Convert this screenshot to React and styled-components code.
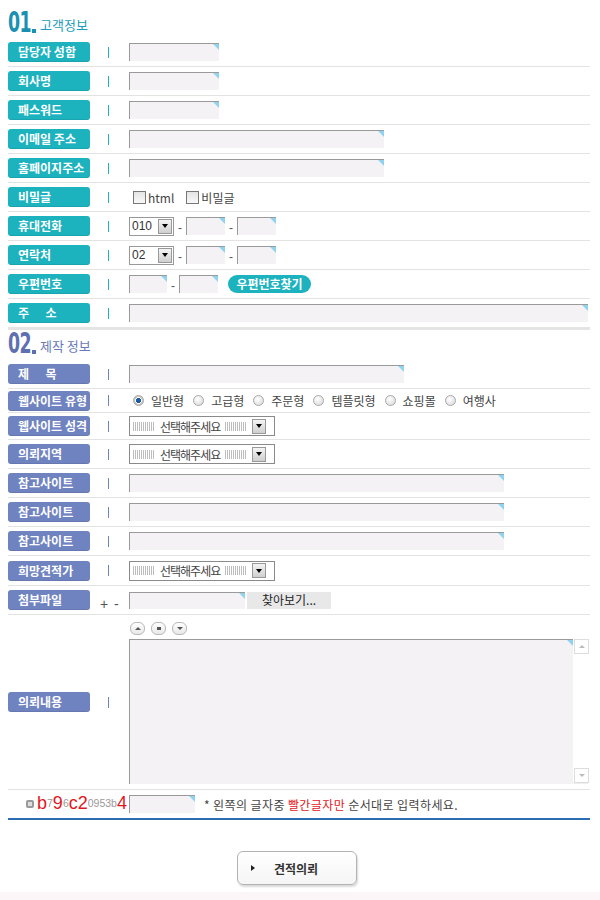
import React from "react";
import styled, { createGlobalStyle, css } from "styled-components";

const Global = createGlobalStyle`
  html, body { margin: 0; padding: 0; background: #fff; }
  body { font-family: "Noto Sans CJK KR", "Liberation Sans", sans-serif; font-size: 12px; color: #333; }
`;

const TEAL = "#1cb2be";
const BLUE = "#7083c1";

const Page = styled.div`
  width: 600px;
  height: 900px;
  display: flex;
  flex-direction: column;
`;

const Wrap = styled.div`
  margin-left: 8px;
  width: 582px;
`;

const Title = styled.div`
  display: flex;
  align-items: flex-end;
  height: ${(p) => p.$h}px;
  padding-bottom: ${(p) => p.$pb}px;
  box-sizing: border-box;
`;

const Num = styled.span`
  display: inline-block;
  width: 23px;
  font-family: "DejaVu Sans", sans-serif;
  font-weight: bold;
  font-size: 28px;
  line-height: 24px;
  letter-spacing: -1px;
  transform: scaleX(0.62);
  transform-origin: left bottom;
  color: ${(p) => p.$c};
`;

const Dot = styled.span`
  position: relative;
  z-index: 1;
  width: 4px;
  height: 4px;
  background: ${(p) => p.$c};
  margin: 0 4px 2px 1px;
`;

const TitleText = styled.span`
  font-size: 13px;
  line-height: 16px;
  color: ${(p) => p.$c};
  margin-bottom: 2px;
`;

const Row = styled.div`
  display: grid;
  grid-template-columns: 82px 39px 1fr;
  align-items: center;
  height: ${(p) => p.$h || 28}px;
  border-bottom: ${(p) => (p.$thick ? "3px solid #e4e4e4" : "1px solid #e3e3e3")};
  box-sizing: content-box;
`;

const Label = styled.div`
  height: 20px;
  border-radius: 3px;
  background: ${(p) => p.$c};
  color: #fff;
  font-weight: bold;
  font-size: 12px;
  line-height: 20px;
  padding-left: 10px;
  white-space: pre;
  box-shadow: inset 0 -1px 0 rgba(0, 0, 0, 0.08);
`;

const Divider = styled.span`
  width: 1px;
  height: 11px;
  margin-left: 18px;
  background: ${(p) => p.$c};
`;

const PlusMinus = styled.span`
  margin-left: 10px;
  margin-top: 8px;
  font-family: "Liberation Sans", sans-serif;
  font-size: 14px;
  color: #555;
  letter-spacing: 1px;
`;

const Field = styled.div`
  display: flex;
  align-items: center;
`;

const Input = styled.div`
  position: relative;
  flex-shrink: 0;
  width: ${(p) => p.$w}px;
  height: ${(p) => p.$h || 18}px;
  box-sizing: border-box;
  background: #f5f2f5;
  border-top: 1px solid #9a9a9a;
  border-left: 1px solid #9a9a9a;
  &::after {
    content: "";
    position: absolute;
    top: 0;
    right: 0;
    border-top: 6px solid #8fd3ef;
    border-left: 6px solid transparent;
  }
`;

const Dash = styled.span`
  width: 12px;
  text-align: center;
  color: #555;
  font-family: "Liberation Sans", sans-serif;
  font-size: 12px;
  padding-top: 4px;
`;

const Check = styled.span`
  width: 11px;
  height: 11px;
  border: 1px solid #777;
  background: linear-gradient(#e4e4e4, #f8f8f8);
  margin: 0 2px 0 4px;
`;

const Text = styled.span`
  font-size: 12px;
  color: #444;
  margin-right: ${(p) => p.$mr || 0}px;
`;

const SmallSelect = styled.div`
  display: flex;
  align-items: center;
  justify-content: space-between;
  width: 45px;
  height: 19px;
  box-sizing: border-box;
  border: 1px solid #999;
  background: #fff;
  padding: 0 1px 0 2px;
  font-family: "Liberation Sans", sans-serif;
  font-size: 12px;
  color: #333;
`;

const ArrowBox = styled.span`
  flex-shrink: 0;
  width: 14px;
  height: 15px;
  box-sizing: border-box;
  border: 1px solid #999;
  background: linear-gradient(#f4f4f4, #cfcfcf);
  display: flex;
  align-items: center;
  justify-content: center;
  &::before {
    content: "";
    border-top: 4px solid #000;
    border-left: 3.5px solid transparent;
    border-right: 3.5px solid transparent;
  }
`;

const Pill = styled.span`
  margin-left: 10px;
  height: 18px;
  width: 83px;
  border-radius: 9px;
  background: ${TEAL};
  color: #fff;
  font-weight: bold;
  font-size: 12px;
  line-height: 18px;
  text-align: center;
`;

const Radio = styled.span`
  width: 11px;
  height: 11px;
  box-sizing: border-box;
  border-radius: 50%;
  border: 1px solid #a8a8a8;
  background: radial-gradient(circle at 40% 35%, #fff, #d6d6d6);
  margin: 0 7px 0 ${(p) => p.$ml}px;
  ${(p) =>
    p.$on &&
    css`
      background: radial-gradient(circle, #1d5aa6 0 2.4px, #fff 2.6px 3.4px, #c8c8c8 3.6px);
    `}
`;

const BigSelect = styled.div`
  display: flex;
  align-items: center;
  width: 146px;
  height: 20px;
  box-sizing: border-box;
  border: 1px solid #8a8a8a;
  background: #fff;
  padding: 0 1px 0 3px;
  font-size: 12px;
  letter-spacing: -1px;
  white-space: nowrap;
  color: #444;
  gap: 5px;
`;

const Stripes = styled.span`
  flex-shrink: 0;
  width: 22px;
  height: 9px;
  background: repeating-linear-gradient(90deg, #bdbdbd 0 1px, #fff 1px 2px);
`;

const FileBtn = styled.span`
  width: 84px;
  height: 17px;
  margin-left: 2px;
  background: #e8e8e8;
  text-align: center;
  font-size: 12px;
  line-height: 16px;
  color: #222;
`;

const TextRow = styled.div`
  display: grid;
  grid-template-columns: 82px 39px 1fr;
  align-items: center;
  height: 174px;
  border-bottom: 1px solid #e3e3e3;
`;

const Editor = styled.div`
  display: flex;
  flex-direction: column;
  gap: 4px;
  padding-top: 1px;
`;

const EdBtns = styled.div`
  display: flex;
  gap: 6px;
  padding-left: 1px;
`;

const EdBtn = styled.span`
  width: 13px;
  height: 11px;
  border-radius: 6px;
  border: 1px solid #b8b8b8;
  background: linear-gradient(#fff, #e8e8e8);
  display: flex;
  align-items: center;
  justify-content: center;
  &::before {
    content: "";
    ${(p) =>
      p.$kind === "up"
        ? css`border-bottom: 3px solid #555; border-left: 3px solid transparent; border-right: 3px solid transparent;`
        : p.$kind === "down"
        ? css`border-top: 3px solid #555; border-left: 3px solid transparent; border-right: 3px solid transparent;`
        : css`width: 4px; height: 3px; background: #555;`}
  }
`;

const AreaBox = styled.div`
  display: flex;
  width: 459px;
  height: 145px;
`;

const Scroll = styled.div`
  width: 15px;
  display: flex;
  flex-direction: column;
  justify-content: space-between;
  background: #fff;
  border-bottom: 1px solid #eee;
`;

const ScrollBtn = styled.span`
  width: 13px;
  height: 13px;
  margin-left: 1px;
  border: 1px solid #ddd;
  display: flex;
  align-items: center;
  justify-content: center;
  &::before {
    content: "";
    ${(p) =>
      p.$up
        ? css`border-bottom: 3px solid #bbb; border-left: 3px solid transparent; border-right: 3px solid transparent;`
        : css`border-top: 3px solid #bbb; border-left: 3px solid transparent; border-right: 3px solid transparent;`}
  }
`;

const CapRow = styled.div`
  display: flex;
  align-items: center;
  height: 28px;
  padding-left: 18px;
  border-bottom: 2px solid #2a6db3;
`;

const CapIcon = styled.span`
  flex-shrink: 0;
  width: 8px;
  height: 8px;
  border-radius: 2px;
  background: #9a9a9a;
  margin-right: 3px;
  display: flex;
  align-items: center;
  justify-content: center;
  &::before {
    content: "";
    width: 4px;
    height: 4px;
    background: #ddd;
  }
`;

const Cap = styled.span`
  font-family: "Liberation Sans", sans-serif;
  font-size: ${(p) => (p.$red ? 18 : 10.5)}px;
  color: ${(p) => (p.$red ? "#e3161c" : "#9a9a9a")};
  line-height: 20px;
  align-self: flex-end;
  margin-bottom: 2px;
`;

const CapCode = styled.div`
  display: flex;
  flex-shrink: 0;
  width: 92px;
  height: 22px;
`;

const Hint = styled.span`
  margin-left: 9px;
  font-size: 12px;
  letter-spacing: 0.4px;
  color: #444;
  white-space: nowrap;
  & em {
    font-style: normal;
    color: #e3161c;
  }
`;

const Footer = styled.div`
  display: flex;
  justify-content: center;
  padding: 31px 6px 0 0;
  height: 41px;
`;

const SubmitBtn = styled.div`
  width: 120px;
  height: 34px;
  box-sizing: border-box;
  border: 1px solid #b3b3b3;
  border-radius: 6px;
  background: linear-gradient(#fff, #f5f5f5);
  box-shadow: 1px 2px 2px rgba(0, 0, 0, 0.15);
  display: flex;
  align-items: center;
  padding-left: 13px;
  gap: 19px;
  font-weight: bold;
  font-size: 12px;
  color: #333;
  &::before {
    content: "";
    border-left: 4px solid #222;
    border-top: 3.5px solid transparent;
    border-bottom: 3.5px solid transparent;
  }
`;

const Band = styled.div`
  flex: 1;
  background: #fcf6f8;
`;

const FieldRow = ({ label, c, children, h, thick, divider = true, extra }) => (
  <Row $h={h} $thick={thick}>
    <Label $c={c}>{label}</Label>
    {divider ? <Divider $c={c === TEAL ? TEAL : BLUE} /> : extra}
    <Field>{children}</Field>
  </Row>
);

const Sel = ({ v }) => (
  <SmallSelect>
    {v}
    <ArrowBox />
  </SmallSelect>
);

const Choose = () => (
  <BigSelect>
    <Stripes />
    선택해주세요
    <Stripes />
    <ArrowBox />
  </BigSelect>
);

export default function App() {
  const types = ["일반형", "고급형", "주문형", "템플릿형", "쇼핑몰", "여행사"];
  return (
    <Page>
      <Global />
      <Wrap>
        <Title $h={38} $pb={3}>
          <Num $c="#1a91b3">01</Num>
          <Dot $c="#1a91b3" />
          <TitleText $c="#1d9db9">고객정보</TitleText>
        </Title>
        <FieldRow label="담당자 성함" c={TEAL}><Input $w={90} /></FieldRow>
        <FieldRow label="회사명" c={TEAL}><Input $w={90} /></FieldRow>
        <FieldRow label="패스워드" c={TEAL}><Input $w={90} /></FieldRow>
        <FieldRow label="이메일 주소" c={TEAL}><Input $w={255} /></FieldRow>
        <FieldRow label="홈페이지주소" c={TEAL}><Input $w={255} /></FieldRow>
        <FieldRow label="비밀글" c={TEAL}>
          <Check />
          <Text $mr={8}>html</Text>
          <Check />
          <Text>비밀글</Text>
        </FieldRow>
        <FieldRow label="휴대전화" c={TEAL}>
          <Sel v="010" />
          <Dash>-</Dash>
          <Input $w={39} />
          <Dash>-</Dash>
          <Input $w={39} />
        </FieldRow>
        <FieldRow label="연락처" c={TEAL}>
          <Sel v="02" />
          <Dash>-</Dash>
          <Input $w={39} />
          <Dash>-</Dash>
          <Input $w={39} />
        </FieldRow>
        <FieldRow label="우편번호" c={TEAL}>
          <Input $w={38} />
          <Dash>-</Dash>
          <Input $w={39} />
          <Pill>우편번호찾기</Pill>
        </FieldRow>
        <FieldRow label={"주      소"} c={TEAL} thick><Input $w={459} /></FieldRow>

        <Title $h={30} $pb={4}>
          <Num $c="#5e70b0">02</Num>
          <Dot $c="#5e70b0" />
          <TitleText $c="#6879b8">제작 정보</TitleText>
        </Title>
        <FieldRow label={"제      목"} c={BLUE}><Input $w={275} /></FieldRow>
        <FieldRow label="웹사이트 유형" c={BLUE} h={23}>
          {types.map((t, i) => (
            <React.Fragment key={t}>
              <Radio $on={i === 0} $ml={i === 0 ? 4 : 9} />
              <Text>{t}</Text>
            </React.Fragment>
          ))}
        </FieldRow>
        <FieldRow label="웹사이트 성격" c={BLUE} h={26}><Choose /></FieldRow>
        <FieldRow label="의뢰지역" c={BLUE}><Choose /></FieldRow>
        <FieldRow label="참고사이트" c={BLUE}><Input $w={375} /></FieldRow>
        <FieldRow label="참고사이트" c={BLUE}><Input $w={375} /></FieldRow>
        <FieldRow label="참고사이트" c={BLUE}><Input $w={375} /></FieldRow>
        <FieldRow label="희망견적가" c={BLUE} h={29}><Choose /></FieldRow>
        <FieldRow label="첨부파일" c={BLUE} divider={false} extra={<PlusMinus>+ -</PlusMinus>}>
          <Input $w={116} $h={17} />
          <FileBtn>찾아보기...</FileBtn>
        </FieldRow>
        <TextRow>
          <Label $c={BLUE}>의뢰내용</Label>
          <Divider $c={BLUE} />
          <Editor>
            <EdBtns>
              <EdBtn $kind="up" />
              <EdBtn $kind="mid" />
              <EdBtn $kind="down" />
            </EdBtns>
            <AreaBox>
              <Input $w={444} $h={145} />
              <Scroll>
                <ScrollBtn $up />
                <ScrollBtn />
              </Scroll>
            </AreaBox>
          </Editor>
        </TextRow>
        <CapRow>
          <CapIcon />
          <CapCode>
            <Cap $red>b</Cap>
            <Cap>7</Cap>
            <Cap $red>9</Cap>
            <Cap>6</Cap>
            <Cap $red>c2</Cap>
            <Cap>0953b</Cap>
            <Cap $red>4</Cap>
          </CapCode>
          <Input $w={66} $h={18} />
          <Hint>
            * 왼쪽의 글자중 <em>빨간글자만</em> 순서대로 입력하세요.
          </Hint>
        </CapRow>
      </Wrap>
      <Footer>
        <SubmitBtn>견적의뢰</SubmitBtn>
      </Footer>
      <Band />
    </Page>
  );
}
